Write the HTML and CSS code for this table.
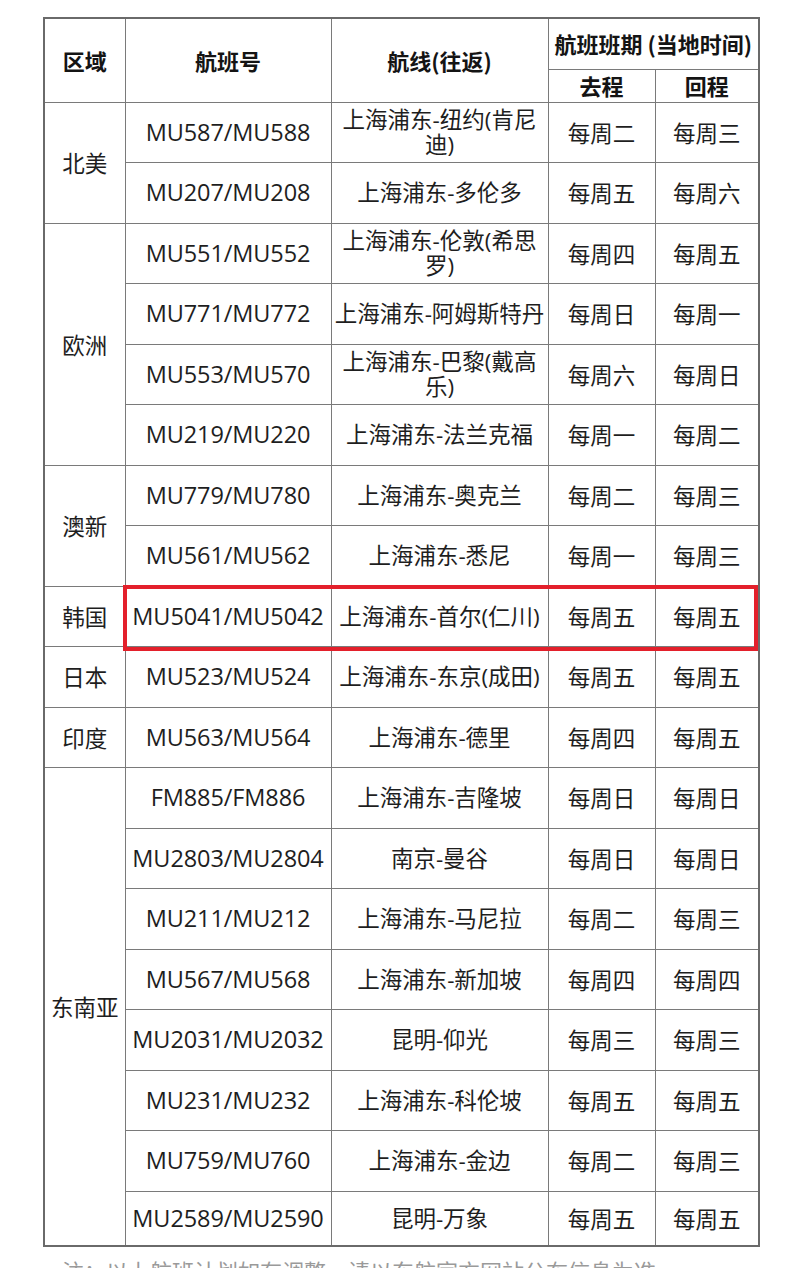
FILE: index.html
```html
<!DOCTYPE html>
<html lang="zh-CN">
<head>
<meta charset="utf-8">
<title>航班班期</title>
<link rel="stylesheet" href="styles.css">
</head>
<body>
<div class="sheet">
  <div class="wrap">
    <table class="flights">
      <colgroup>
        <col class="c-region"><col class="c-no"><col class="c-route"><col class="c-go"><col class="c-back">
      </colgroup>
      <thead>
        <tr class="h1">
          <th rowspan="2">区域</th>
          <th rowspan="2">航班号</th>
          <th rowspan="2">航线(往返)</th>
          <th colspan="2" class="nowrap">航班班期 (当地时间)</th>
        </tr>
        <tr class="h2">
          <th>去程</th>
          <th>回程</th>
        </tr>
      </thead>
      <tbody>
        <tr><td rowspan="2">北美</td><td class="no">MU587/MU588</td><td class="route">上海浦东-纽约(肯尼迪)</td><td>每周二</td><td>每周三</td></tr>
        <tr><td class="no">MU207/MU208</td><td class="route">上海浦东-多伦多</td><td>每周五</td><td>每周六</td></tr>
        <tr><td rowspan="4">欧洲</td><td class="no">MU551/MU552</td><td class="route">上海浦东-伦敦(希思罗)</td><td>每周四</td><td>每周五</td></tr>
        <tr><td class="no">MU771/MU772</td><td class="route">上海浦东-阿姆斯特丹</td><td>每周日</td><td>每周一</td></tr>
        <tr><td class="no">MU553/MU570</td><td class="route">上海浦东-巴黎(戴高乐)</td><td>每周六</td><td>每周日</td></tr>
        <tr><td class="no">MU219/MU220</td><td class="route">上海浦东-法兰克福</td><td>每周一</td><td>每周二</td></tr>
        <tr><td rowspan="2">澳新</td><td class="no">MU779/MU780</td><td class="route">上海浦东-奥克兰</td><td>每周二</td><td>每周三</td></tr>
        <tr><td class="no">MU561/MU562</td><td class="route">上海浦东-悉尼</td><td>每周一</td><td>每周三</td></tr>
        <tr><td>韩国</td><td class="no">MU5041/MU5042</td><td class="route">上海浦东-首尔(仁川)</td><td>每周五</td><td>每周五</td></tr>
        <tr><td>日本</td><td class="no">MU523/MU524</td><td class="route">上海浦东-东京(成田)</td><td>每周五</td><td>每周五</td></tr>
        <tr><td>印度</td><td class="no">MU563/MU564</td><td class="route">上海浦东-德里</td><td>每周四</td><td>每周五</td></tr>
        <tr><td rowspan="8">东南亚</td><td class="no">FM885/FM886</td><td class="route">上海浦东-吉隆坡</td><td>每周日</td><td>每周日</td></tr>
        <tr><td class="no">MU2803/MU2804</td><td class="route">南京-曼谷</td><td>每周日</td><td>每周日</td></tr>
        <tr><td class="no">MU211/MU212</td><td class="route">上海浦东-马尼拉</td><td>每周二</td><td>每周三</td></tr>
        <tr><td class="no">MU567/MU568</td><td class="route">上海浦东-新加坡</td><td>每周四</td><td>每周四</td></tr>
        <tr><td class="no">MU2031/MU2032</td><td class="route">昆明-仰光</td><td>每周三</td><td>每周三</td></tr>
        <tr><td class="no">MU231/MU232</td><td class="route">上海浦东-科伦坡</td><td>每周五</td><td>每周五</td></tr>
        <tr><td class="no">MU759/MU760</td><td class="route">上海浦东-金边</td><td>每周二</td><td>每周三</td></tr>
        <tr class="last"><td class="no">MU2589/MU2590</td><td class="route">昆明-万象</td><td>每周五</td><td>每周五</td></tr>
      </tbody>
    </table>
    <div class="highlight"></div>
  </div>
  <p class="note">注：以上航班计划如有调整，请以东航官方网站公布信息为准。</p>
</div>
</body>
</html>
```

FILE: styles.css
```css
html, body {
  margin: 0;
  padding: 0;
  background: #ffffff;
}

.sheet {
  padding: 17px 0 0 43px;
  font-family: "Open Sans", "Noto Sans CJK SC", sans-serif;
  color: #1e1e1e;
}

.wrap {
  position: relative;
  width: 715px;
}

.flights {
  width: 715px;
  table-layout: fixed;
  border-collapse: collapse;
  border: 2px solid #6a6a6a;
}

.c-region { width: 81px; }
.c-no { width: 206px; }
.c-route { width: 217px; }
.c-go { width: 107px; }
.c-back { width: 104px; }

.flights th,
.flights td {
  border: 1px solid #7a7a7a;
  padding: 0 2px;
  text-align: center;
  vertical-align: middle;
  line-height: 25px;
}

.flights th {
  font-family: "Noto Sans CJK SC", sans-serif;
  font-weight: 700;
  font-size: 22px;
  color: #141414;
}

.flights td {
  font-family: "Noto Sans CJK SC", sans-serif;
  font-weight: 400;
  font-size: 22.5px;
}

.flights td.no {
  font-family: "Open Sans", "Noto Sans CJK SC", sans-serif;
  font-size: 23.5px;
  letter-spacing: -0.1px;
  white-space: nowrap;
  padding: 0;
}

.flights td.route {
  font-family: "Open Sans", "Noto Sans CJK SC", sans-serif;
  font-size: 22.5px;
  padding: 0 1px;
}

.flights th.nowrap {
  white-space: nowrap;
  padding: 0;
}

.h1 { height: 51px; }
.h2 { height: 33px; }
.flights tbody tr { height: 60.5px; }
.flights tbody tr.last { height: 55px; }

.highlight {
  position: absolute;
  left: 80px;
  top: 568px;
  width: 635px;
  height: 66px;
  box-sizing: border-box;
  border: 4px solid #e3202b;
  pointer-events: none;
}

.note {
  margin: 8px 0 0 19px;
  font-family: "Noto Sans CJK SC", sans-serif;
  font-size: 22px;
  line-height: 30px;
  color: #9a9a9a;
  white-space: nowrap;
}
```
